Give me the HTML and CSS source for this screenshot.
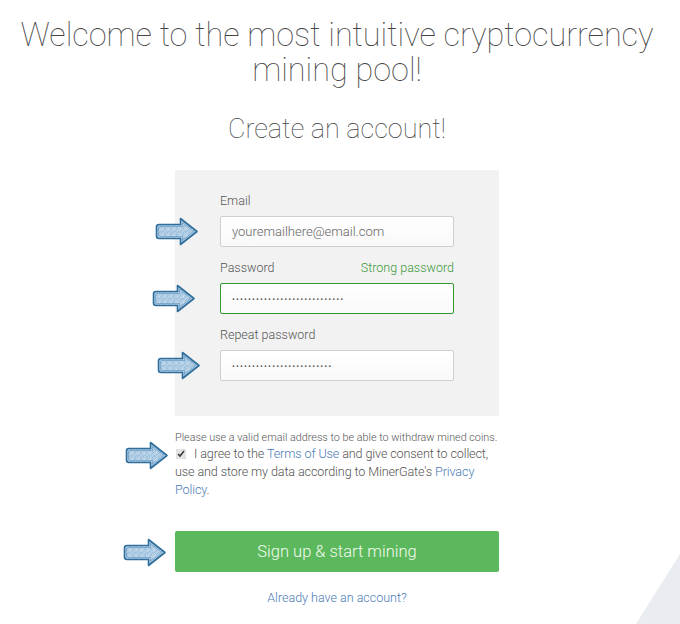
FILE: index.html
```html
<!DOCTYPE html>
<html lang="en">
<head>
    <meta charset="UTF-8">
    <title>Create an account</title>
    <link rel="stylesheet" href="styles.css">
</head>
<body>
<div class="corner"></div>
<div class="page">
    <h1>Welcome to the most intuitive cryptocurrency mining pool!</h1>
    <h2>Create an account!</h2>

    <div class="signup">
        <div class="panel">
            <div class="field">
                <div class="label-row"><label for="email">Email</label></div>
                <input type="email" id="email" class="text-input" placeholder="youremailhere@email.com">
                <svg class="arrow arrow-email" viewBox="0 0 44 31"><use href="#arrowShape"/></svg>
            </div>
            <div class="field">
                <div class="label-row">
                    <label for="password">Password</label>
                    <span class="strength">Strong password</span>
                </div>
                <input type="password" id="password" class="text-input pass-input is-valid" value="abcdefghijklmnopqrstuvwxyz12">
                <svg class="arrow arrow-pass" viewBox="0 0 44 31"><use href="#arrowShape"/></svg>
            </div>
            <div class="field">
                <div class="label-row"><label for="repeat">Repeat password</label></div>
                <input type="password" id="repeat" class="text-input pass-input" value="abcdefghijklmnopqrstuvwxy">
                <svg class="arrow arrow-repeat" viewBox="0 0 44 31"><use href="#arrowShape"/></svg>
            </div>
        </div>

        <div class="terms">
            <svg class="arrow arrow-terms" viewBox="0 0 44 31"><use href="#arrowShape"/></svg>
            <p class="hint">Please use a valid email address to be able to withdraw mined coins.</p>
            <p class="agree"><input type="checkbox" class="check" checked> I agree to the <a href="#">Terms of Use</a> and give consent to collect, use and store my data according to MinerGate's <a href="#">Privacy Policy</a>.</p>
        </div>

        <div class="submit-row">
            <svg class="arrow arrow-submit" viewBox="0 0 44 31"><use href="#arrowShape"/></svg>
            <button class="submit">Sign up &amp; start mining</button>
        </div>

        <a href="#" class="login-link">Already have an account?</a>
    </div>
</div>

<!-- annotation arrow -->
<svg width="0" height="0" class="defs">
    <defs>
        <pattern id="scribble" width="6" height="6" patternUnits="userSpaceOnUse">
            <rect width="6" height="6" fill="#b4d0e6"/>
            <path d="M0 5 L5 0 M3 6 L6 3" stroke="#8fb6d6" stroke-width="0.8"/>
            <circle cx="1.5" cy="1.5" r="0.6" fill="#d8e8f3"/>
        </pattern>
        <symbol id="arrowShape" viewBox="0 0 44 31">
            <path d="M4 8.5 H25.5 V2.5 L42 15.5 L25.5 28.5 V22.5 H4 Q1.5 22.5 1.5 20 V11 Q1.5 8.5 4 8.5 Z"
                  fill="url(#scribble)" stroke="#2f6e9c" stroke-width="1.6" stroke-linejoin="round"/>
            <path d="M5 10.5 H27.5 V6.5 L39 15.5 L27.5 24.5 V20.5 H5 Q3.5 20.5 3.5 19 V12 Q3.5 10.5 5 10.5 Z"
                  fill="none" stroke="#6fa0c6" stroke-width="0.8" stroke-linejoin="round"/>
        </symbol>
    </defs>
</svg>
</body>
</html>
```

FILE: styles.css
```css
body {
    margin: 0;
    background: #fff;
    font-family: Roboto, "Liberation Sans", sans-serif;
    color: #555;
    position: relative;
    min-height: 624px;
    overflow: hidden;
}

.defs {
    position: absolute;
}

/* light shape in the lower right corner */
.corner {
    position: absolute;
    right: 0;
    bottom: 0;
    width: 44px;
    height: 70px;
    background: #e9ecf0;
    clip-path: polygon(100% 0, 100% 100%, 0 100%);
}

.page {
    padding-right: 6px;
    text-align: center;
    position: relative;
}

h1 {
    font-size: 32.4px;
    font-weight: 100;
    line-height: 35px;
    color: #444;
    margin: 18px 6px 0;
}

h2 {
    font-size: 27px;
    font-weight: 100;
    line-height: 30px;
    color: #444;
    margin: 26px 0 0;
}

.signup {
    width: 324px;
    margin: 26px auto 0;
    text-align: left;
}

.panel {
    background: #f2f2f2;
    padding: 23px 45px 35px;
}

.field {
    position: relative;
    margin-bottom: 13px;
}

.field:last-child {
    margin-bottom: 0;
}

.label-row {
    display: flex;
    justify-content: space-between;
    font-size: 12.5px;
    line-height: 16px;
    margin-bottom: 7px;
    color: #555;
    font-weight: 300;
}

.strength {
    color: #3a983a;
}

.text-input {
    display: block;
    box-sizing: border-box;
    width: 234px;
    height: 31px;
    margin: 0;
    padding: 0 11px;
    border: 1px solid #cfcfcf;
    border-radius: 2px;
    background: linear-gradient(#fff, #f9f9f9);
    font-family: Roboto, "Liberation Sans", sans-serif;
    font-size: 13px;
    font-weight: 300;
    color: #555;
    outline: none;
}

.text-input::placeholder {
    color: #666;
}

.pass-input {
    font-size: 9px;
    letter-spacing: 1.1px;
}

.is-valid {
    border-color: #2f9a2f;
}

/* annotation arrows */
.arrow {
    position: absolute;
    width: 44px;
    height: 31px;
}

.arrow-email { left: -65px; top: 23px; }
.arrow-pass { left: -68px; top: 23px; }
.arrow-repeat { left: -63px; top: 23px; }

.terms {
    position: relative;
    margin-top: 15px;
}

.arrow-terms { left: -50px; top: 9px; }

.hint {
    font-size: 10.8px;
    line-height: 14px;
    margin: 0;
    color: #555;
    font-weight: 300;
    white-space: nowrap;
}

.agree {
    font-size: 12.6px;
    line-height: 18px;
    letter-spacing: -0.12px;
    margin: 0;
    color: #555;
    font-weight: 300;
}

.check {
    width: 10px;
    height: 10px;
    margin: 0 5px 0 1px;
    vertical-align: -1px;
    accent-color: #e4e4e4;
}

.agree a,
.login-link {
    color: #4b7bb6;
    text-decoration: none;
}

.submit-row {
    position: relative;
    margin-top: 32px;
}

.arrow-submit { left: -52px; top: 6px; }

.submit {
    display: block;
    width: 100%;
    height: 41px;
    border: none;
    border-radius: 2px;
    background: #5cb85c;
    color: #f3faf0;
    font-family: Roboto, "Liberation Sans", sans-serif;
    font-size: 16.5px;
    font-weight: 300;
    cursor: pointer;
}

.login-link {
    display: block;
    text-align: center;
    font-size: 12.5px;
    line-height: 18px;
    margin-top: 17px;
    font-weight: 300;
}
```
